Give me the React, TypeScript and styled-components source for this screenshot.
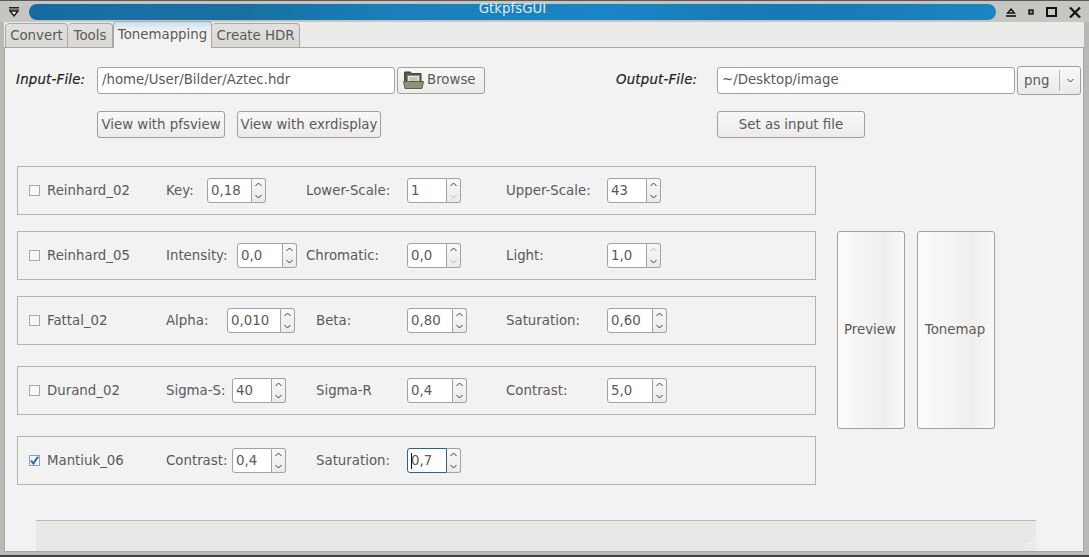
import React from "react";
import styled, {createGlobalStyle} from "styled-components";

const GlobalStyle = createGlobalStyle`
  html, body {
    margin: 0;
    padding: 0;
    width: 1089px;
    height: 557px;
    overflow: hidden;
    background: #c4c3c0;
  }
  * {
    box-sizing: border-box;
  }
`

const FolderIcon = () => (
    <svg width="21" height="18" viewBox="0 0 21 18">
        <path d="M1.5 2.5V1h6l1 1.5h9.5V12h-16.5z" fill="#55564a" stroke="#45463b"/>
        <rect x="4.5" y="4.5" width="12" height="8" fill="#e8e8e0" stroke="#8a8b7e"/>
        <path d="M6.5 7h8M6.5 9h8" stroke="#a2a296"/>
        <path d="M0.5 10.5h20l-1.5 7H2z" fill="#8f917a" stroke="#5e5f4e"/>
    </svg>
)

const Caret = ({up}: {up?: boolean}) => (
    <svg width="7" height="5" viewBox="0 0 7 5">
        <path d={up ? "M0.5 4L3.5 1l3 3" : "M0.5 1l3 3 3-3"} fill="none" stroke="#3c3c3c" strokeWidth="1"/>
    </svg>
)

type Param = {
    label: string
    value: string
    width: number
    labelWidth: number
    fieldWidth: number
    focused?: boolean
    upDisabled?: boolean
    downDisabled?: boolean
}

const Spin = ({label, value, width, labelWidth, fieldWidth, focused, upDisabled, downDisabled}: Param) => (
    <SpinGroup $width={width}>
        <ParamLabel $width={labelWidth}>{label}</ParamLabel>
        <SpinBox>
            <SpinField $width={fieldWidth} $focused={focused}>
                {focused && <TextCursor/>}
                {value}
            </SpinField>
            <SpinArrows>
                <SpinArrow $dim={upDisabled}><Caret up/></SpinArrow>
                <SpinArrow $dim={downDisabled}><Caret/></SpinArrow>
            </SpinArrows>
        </SpinBox>
    </SpinGroup>
)

const rows: {name: string, gap: number, checked?: boolean, params: Param[]}[] = [
    {name: "Reinhard_02", gap: 0, params: [
        {label: "Key:", value: "0,18", width: 140, labelWidth: 41, fieldWidth: 45},
        {label: "Lower-Scale:", value: "1", width: 200, labelWidth: 101, fieldWidth: 40, downDisabled: true},
        {label: "Upper-Scale:", value: "43", width: 200, labelWidth: 101, fieldWidth: 40},
    ]},
    {name: "Reinhard_05", gap: 16, params: [
        {label: "Intensity:", value: "0,0", width: 140, labelWidth: 71, fieldWidth: 46},
        {label: "Chromatic:", value: "0,0", width: 200, labelWidth: 101, fieldWidth: 40, downDisabled: true},
        {label: "Light:", value: "1,0", width: 200, labelWidth: 101, fieldWidth: 40, upDisabled: true},
    ]},
    {name: "Fattal_02", gap: 16, params: [
        {label: "Alpha:", value: "0,010", width: 150, labelWidth: 61, fieldWidth: 54},
        {label: "Beta:", value: "0,80", width: 190, labelWidth: 91, fieldWidth: 46},
        {label: "Saturation:", value: "0,60", width: 200, labelWidth: 101, fieldWidth: 46},
    ]},
    {name: "Durand_02", gap: 21, params: [
        {label: "Sigma-S:", value: "40", width: 150, labelWidth: 66, fieldWidth: 40},
        {label: "Sigma-R", value: "0,4", width: 190, labelWidth: 91, fieldWidth: 46},
        {label: "Contrast:", value: "5,0", width: 200, labelWidth: 101, fieldWidth: 46},
    ]},
    {name: "Mantiuk_06", gap: 21, checked: true, params: [
        {label: "Contrast:", value: "0,4", width: 150, labelWidth: 66, fieldWidth: 40},
        {label: "Saturation:", value: "0,7", width: 190, labelWidth: 91, fieldWidth: 40, focused: true},
    ]},
]

export default function App() {
    return (
        <>
            <GlobalStyle/>
            <Window>
                <TitleBar>
                    <MenuButton>
                        <svg width="10" height="10" viewBox="0 0 10 10">
                            <path d="M0 0.5h10M0 2h10" stroke="#222" strokeWidth="1.2"/>
                            <path d="M1 4h8L5 9z" fill="#eee" stroke="#111" strokeWidth="1.3"/>
                        </svg>
                    </MenuButton>
                    <TitlePill>GtkpfsGUI</TitlePill>
                    <WindowButtons>
                        <svg width="10" height="9" viewBox="0 0 10 9">
                            <path d="M5 1L8.5 5H1.5z" fill="none" stroke="#111" strokeWidth="1.3"/>
                            <path d="M0 8h10" stroke="#111" strokeWidth="1.6"/>
                        </svg>
                        <svg width="6" height="6" viewBox="0 0 6 6">
                            <rect x="1" y="1" width="4" height="4" fill="#888" stroke="#111" strokeWidth="1.4"/>
                        </svg>
                        <svg width="11" height="10" viewBox="0 0 11 10">
                            <rect x="1" y="1" width="9" height="8" fill="none" stroke="#111" strokeWidth="2"/>
                        </svg>
                        <svg width="12" height="11" viewBox="0 0 12 11">
                            <path d="M1 0.5l10 10M11 0.5l-10 10" stroke="#111" strokeWidth="2.2"/>
                        </svg>
                    </WindowButtons>
                </TitleBar>
                <Client>
                    <TabBar>
                        <Tab $width={63}>Convert</Tab>
                        <Tab $width={45}>Tools</Tab>
                        <Tab $width={99} $active>Tonemapping</Tab>
                        <Tab $width={88}>Create HDR</Tab>
                    </TabBar>
                    <Page>
                        <FilesRow>
                            <FileColumn $width={600}>
                                <FileLine>
                                    <FileLabel $width={81}>Input-File:</FileLabel>
                                    <TextInput $width={298}>/home/User/Bilder/Aztec.hdr</TextInput>
                                    <BrowseButton><FolderIcon/>Browse</BrowseButton>
                                </FileLine>
                                <ButtonLine>
                                    <PlainButton $width={128}>View with pfsview</PlainButton>
                                    <PlainButton $width={144}>View with exrdisplay</PlainButton>
                                </ButtonLine>
                            </FileColumn>
                            <FileColumn>
                                <FileLine>
                                    <FileLabel $width={101}>Output-File:</FileLabel>
                                    <TextInput $width={298}>~/Desktop/image</TextInput>
                                    <Combo>
                                        <ComboValue>png</ComboValue>
                                        <ComboArrow><Caret/></ComboArrow>
                                    </Combo>
                                </FileLine>
                                <OutputButtonLine>
                                    <PlainButton $width={148}>Set as input file</PlainButton>
                                </OutputButtonLine>
                            </FileColumn>
                        </FilesRow>
                        <Body>
                            <Methods>
                                {rows.map(row => (
                                    <MethodFrame key={row.name} $gap={row.gap}>
                                        <CheckLabel>
                                            <CheckBox $checked={row.checked}>
                                                {row.checked && (
                                                    <svg width="9" height="9" viewBox="0 0 9 9">
                                                        <path d="M1 4.5l2.4 3L8 0.8" fill="none" stroke="#2b67ad" strokeWidth="2"/>
                                                    </svg>
                                                )}
                                            </CheckBox>
                                            {row.name}
                                        </CheckLabel>
                                        {row.params.map(p => <Spin key={p.label} {...p}/>)}
                                    </MethodFrame>
                                ))}
                            </Methods>
                            <Actions>
                                <TallButton $width={68}>Preview</TallButton>
                                <TallButton $width={78}>Tonemap</TallButton>
                            </Actions>
                        </Body>
                        <StatusBar>
                            <Grip>
                                <svg width="12" height="12" viewBox="0 0 12 12">
                                    <path d="M10 0h1v1h-1zM7 3h1v1H7zM10 3h1v1h-1zM4 6h1v1H4zM7 6h1v1H7zM10 6h1v1h-1zM1 9h1v1H1zM4 9h1v1H4zM7 9h1v1H7zM10 9h1v1h-1z" fill="#fff"/>
                                </svg>
                            </Grip>
                        </StatusBar>
                    </Page>
                </Client>
            </Window>
        </>
    )
}

const Window = styled.div`
  width: 1089px;
  height: 557px;
  display: flex;
  flex-direction: column;
  font-family: "DejaVu Sans", sans-serif;
  font-size: 13.33px;
  color: #5a5a5a;
  background: #b9b8b5;
  border-bottom: 2px solid #3f3f3d;
`

const TitleBar = styled.div`
  height: 22px;
  flex: none;
  display: flex;
  align-items: flex-start;
  padding: 3px 0 0 9px;
  background: #c6c5c2;
  border-top: 1px solid #5a5a58;
`

const MenuButton = styled.div`
  width: 12px;
  height: 16px;
  display: flex;
  align-items: center;
  margin-right: 8px;
`

const TitlePill = styled.div`
  width: 967px;
  height: 16px;
  flex: none;
  border-radius: 8px;
  background: linear-gradient(90deg, #156a9f 0, #1a6fa6 12%, #17709f 22%, #1b7fba 38%, #1b84c4 60%, #1878b4 78%, #1c84c2 100%);
  color: #dcebf4;
  font-size: 13.33px;
  line-height: 10px;
  text-align: center;
`

const WindowButtons = styled.div`
  height: 16px;
  margin-left: 10px;
  display: flex;
  align-items: center;
  gap: 12px;
`

const Client = styled.div`
  flex: 1;
  min-height: 0;
  margin: 0 5px 3px 4px;
  display: flex;
  flex-direction: column;
  background: #ebebe9;
`

const TabBar = styled.div`
  height: 26px;
  flex: none;
  display: flex;
  align-items: flex-end;
  padding-left: 1px;
  border-bottom: 1px solid #a9a8a6;
`

const Tab = styled.div<{ $width: number, $active?: boolean }>`
  width: ${props => props.$width}px;
  height: ${props => props.$active ? "27px" : "25px"};
  margin-bottom: -1px;
  padding-top: ${props => props.$active ? "4px" : "3px"};
  border: 1px solid #a9a8a6;
  border-left-width: ${props => props.$active ? "1px" : "0"};
  border-bottom: ${props => props.$active ? "none" : "1px solid #a9a8a6"};
  border-radius: 4px 4px 0 0;
  background: ${props => props.$active ? "linear-gradient(#c9e0f0 0, #f3f2f3 9px)" : "linear-gradient(#e2e1de, #d9d8d5)"};
  line-height: 17px;
  text-align: center;
  white-space: nowrap;
  position: relative;
  &:first-child {
    border-left-width: 1px;
  }
`

const Page = styled.div`
  flex: 1;
  min-height: 0;
  display: flex;
  flex-direction: column;
  background: #f3f2f3;
  border-right: 1px solid #a9a8a6;
  border-left: 1px solid #a9a8a6;
  border-bottom: 1px solid #a9a8a6;
`

const FilesRow = styled.div`
  height: 118px;
  flex: none;
  display: flex;
  padding: 18px 0 0 11px;
`

const FileColumn = styled.div<{ $width?: number }>`
  width: ${props => props.$width ? `${props.$width}px` : "auto"};
  display: flex;
  flex-direction: column;
`

const FileLine = styled.div`
  display: flex;
  align-items: center;
  height: 28px;
`

const FileLabel = styled.div<{ $width: number }>`
  width: ${props => props.$width}px;
  padding-bottom: 2px;
  font-style: italic;
  letter-spacing: 0.2px;
  color: #222;
  -webkit-text-stroke: 0.2px #222;
`

const TextInput = styled.div<{ $width: number }>`
  width: ${props => props.$width}px;
  height: 27px;
  padding: 0 4px;
  border: 1px solid #a3a2a0;
  border-radius: 3px;
  background: #fff;
  line-height: 23px;
`

const raised = `
  border: 1px solid #a09f9d;
  border-radius: 3px;
  background: linear-gradient(90deg, #fcfcfc 0, #f3f2f2 50%, #efeeed 72%, #f9f9f9 100%);
`

const BrowseButton = styled.div`
  ${raised}
  width: 88px;
  height: 27px;
  margin-left: 2px;
  display: flex;
  align-items: center;
  gap: 3px;
  padding-left: 5px;
  padding-bottom: 1px;
  background: linear-gradient(#f8f8f8, #ecebea);
`

const PlainButton = styled.div<{ $width: number }>`
  ${raised}
  width: ${props => props.$width}px;
  height: 27px;
  line-height: 25px;
  text-align: center;
  white-space: nowrap;
  background: linear-gradient(#f8f8f8, #ecebea);
`

const ButtonLine = styled.div`
  display: flex;
  gap: 12px;
  margin: 17px 0 0 81px;
`

const OutputButtonLine = styled.div`
  display: flex;
  margin: 17px 0 0 101px;
`

const Combo = styled.div`
  ${raised}
  width: 64px;
  height: 29px;
  margin-left: 2px;
  display: flex;
  align-items: center;
  background: linear-gradient(#f8f8f8, #ecebea);
`

const ComboValue = styled.div`
  flex: 1;
  padding-left: 6px;
`

const ComboArrow = styled.div`
  width: 21px;
  height: 21px;
  display: flex;
  align-items: center;
  justify-content: center;
  border-left: 1px solid #b5b4b2;
`

const Body = styled.div`
  flex: 1;
  min-height: 0;
  display: flex;
`

const Methods = styled.div`
  width: 799px;
  margin-left: 12px;
  display: flex;
  flex-direction: column;
`

const MethodFrame = styled.div<{ $gap: number }>`
  height: 49px;
  flex: none;
  margin-top: ${props => props.$gap}px;
  display: flex;
  align-items: center;
  padding-left: 11px;
  border: 1px solid #b4b3b1;
`

const CheckLabel = styled.div`
  width: 137px;
  flex: none;
  display: flex;
  align-items: center;
  gap: 7px;
`

const CheckBox = styled.span<{ $checked?: boolean }>`
  width: 11px;
  height: 11px;
  display: flex;
  align-items: center;
  justify-content: center;
  border: 1px solid ${props => props.$checked ? "#7da3c9" : "#a9a8a6"};
  background: ${props => props.$checked ? "#f4f8fc" : "#f7f7f7"};
`

const SpinGroup = styled.div<{ $width: number }>`
  width: ${props => props.$width}px;
  flex: none;
  display: flex;
  align-items: center;
`

const ParamLabel = styled.div<{ $width: number }>`
  width: ${props => props.$width}px;
  flex: none;
  white-space: nowrap;
`

const SpinBox = styled.div`
  display: flex;
  height: 25px;
`

const SpinField = styled.div<{ $width: number, $focused?: boolean }>`
  position: relative;
  width: ${props => props.$width}px;
  padding-left: 3px;
  line-height: 23px;
  background: #fff;
  border: 1px solid ${props => props.$focused ? "#2c5f99" : "#a3a2a0"};
  border-radius: 3px 0 0 3px;
`

const TextCursor = styled.span`
  position: absolute;
  left: 3px;
  top: 4px;
  width: 1px;
  height: 16px;
  background: #111;
`

const SpinArrows = styled.div`
  width: 14px;
  display: flex;
  flex-direction: column;
  border: 1px solid #a3a2a0;
  border-left: none;
  border-radius: 0 3px 3px 0;
  background: linear-gradient(#f8f8f8, #ecebea);
`

const SpinArrow = styled.div<{ $dim?: boolean }>`
  flex: 1;
  display: flex;
  align-items: center;
  justify-content: center;
  opacity: ${props => props.$dim ? 0.3 : 1};
`

const Actions = styled.div`
  display: flex;
  gap: 12px;
  margin: 65px 0 0 21px;
`

const TallButton = styled.div<{ $width: number }>`
  ${raised}
  width: ${props => props.$width}px;
  height: 198px;
  display: flex;
  align-items: center;
  justify-content: center;
  padding: 0 2px 2px 0;
`

const StatusBar = styled.div`
  height: 31px;
  flex: none;
  margin: 0 47px 0 31px;
  position: relative;
  background: #e9e8e6;
  border-top: 1px solid #b9b8b6;
`

const Grip = styled.div`
  position: absolute;
  right: 0;
  bottom: 2px;
  display: flex;
`
